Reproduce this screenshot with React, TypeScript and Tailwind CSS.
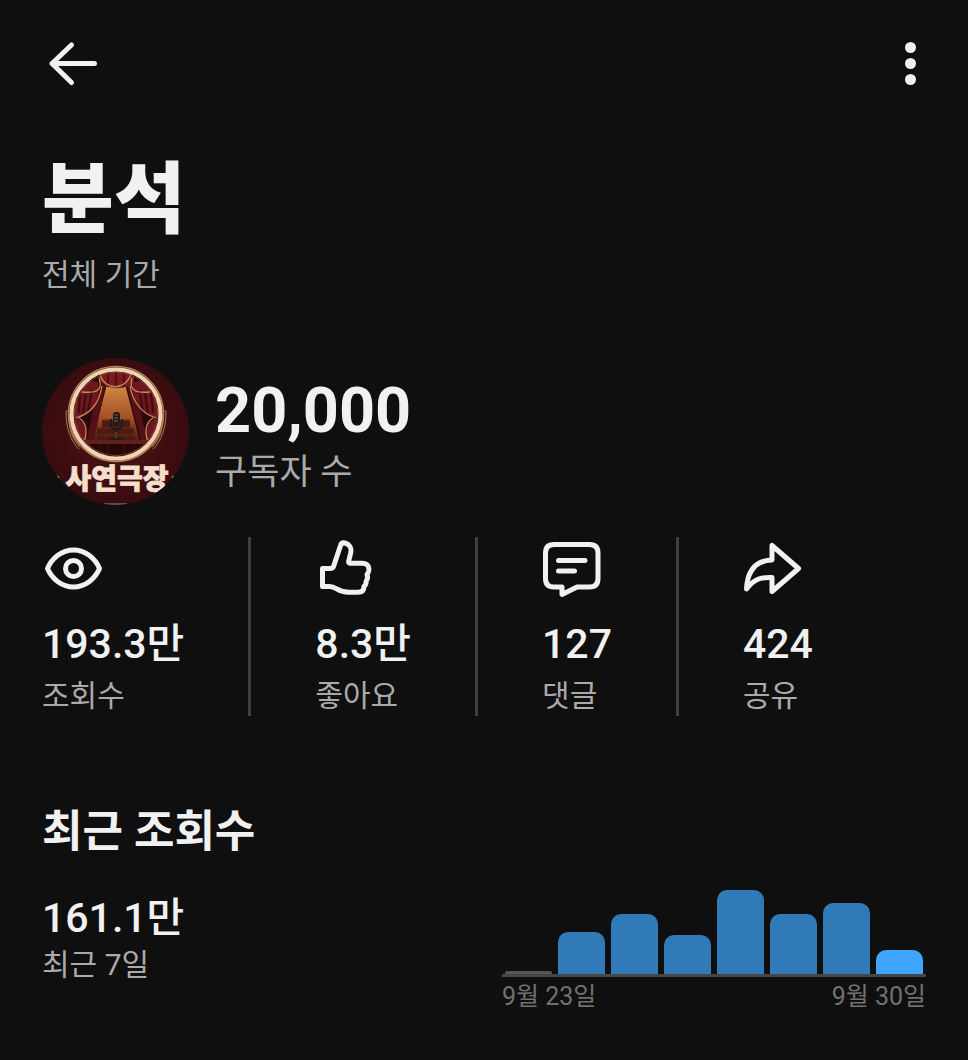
import type { ReactNode } from "react";

const bars = [
  { day: 23, views: 3, color: "bg-[#555555]", radius: "rounded-t-[2px]" },
  { day: 24, views: 42, color: "bg-[#307ab8]", radius: "rounded-t-[10px]" },
  { day: 25, views: 60, color: "bg-[#307ab8]", radius: "rounded-t-[10px]" },
  { day: 26, views: 39, color: "bg-[#307ab8]", radius: "rounded-t-[10px]" },
  { day: 27, views: 84, color: "bg-[#307ab8]", radius: "rounded-t-[10px]" },
  { day: 28, views: 60, color: "bg-[#307ab8]", radius: "rounded-t-[10px]" },
  { day: 29, views: 71, color: "bg-[#307ab8]", radius: "rounded-t-[10px]" },
  { day: 30, views: 24, color: "bg-[#40a5ff]", radius: "rounded-t-[10px]" },
];

const maxViews = Math.max(...bars.map((bar) => bar.views));

function StatIcon({ children }: { children: ReactNode }) {
  return (
    <svg
      className="block w-16 h-16"
      viewBox="0 1 64 64"
      fill="none"
      stroke="currentColor"
      strokeWidth="5"
      strokeLinecap="round"
      strokeLinejoin="round"
      aria-hidden="true"
    >
      {children}
    </svg>
  );
}

const stats = [
  {
    value: "193.3만",
    label: "조회수",
    icon: (
      <StatIcon>
        <path d="M5.500 32.500C10 22 20 14 31.500 14S53 22 57.500 32.500C53 43 43 51 31.500 51S10 43 5.500 32.500Z" />
        <circle cx="31.500" cy="32.500" r="8" />
      </StatIcon>
    ),
  },
  {
    value: "8.3만",
    label: "좋아요",
    icon: (
      <StatIcon>
        <path d="M7.500 32.500H15Q17.800 32.500 18.800 29.800L25.500 9.500Q26.500 6.200 30 7C34.500 8.200 36.800 12 35.800 16.500L33.700 25Q33.200 27.300 35.500 27.300H47Q54.500 27.300 53.800 34.500Q53.500 36.500 52 38.500Q53.500 41.500 51 45.500Q51.500 48.500 49 50.500Q49 56.300 43 56.300H34C22 56.300 22 50.500 14.500 50.500H7.500Z" />
      </StatIcon>
    ),
  },
  {
    value: "127",
    label: "댓글",
    icon: (
      <StatIcon>
        <path d="M12 8.500H47.500Q56 8.500 56 17V42.500Q56 51 47.500 51H35L20 58.500V51H12Q3.500 51 3.500 42.500V17Q3.500 8.500 12 8.500Z" />
        <path d="M16.500 24.500H43M16.500 35H32.500" />
      </StatIcon>
    ),
  },
  {
    value: "424",
    label: "공유",
    icon: (
      <StatIcon>
        <path d="M29 9.500V24C13 24.500 4.500 34 3.500 53C11 43 18 41 29 41.500V55.500L55.500 32.500Z" />
      </StatIcon>
    ),
  },
];

function Avatar() {
  return (
    <svg
      className="block w-[147px] h-[147px] shrink-0 rounded-full"
      viewBox="0 0 147 147"
      role="img"
      aria-label="사연극장"
    >
      <defs>
        <radialGradient id="backdrop" cx="50%" cy="50%" r="55%">
          <stop offset="0" stopColor="#501317" />
          <stop offset="1" stopColor="#360b0e" />
        </radialGradient>
        <linearGradient id="spotlight" x1="0" y1="0" x2="0" y2="1">
          <stop offset="0" stopColor="#d38a45" />
          <stop offset="0.55" stopColor="#a75427" />
          <stop offset="1" stopColor="#4c170f" />
        </linearGradient>
        <clipPath id="stage">
          <circle cx="74" cy="56" r="43" />
        </clipPath>
      </defs>
      <rect width="147" height="147" fill="url(#backdrop)" />

      {/* Side scrolls of the frame */}
      <g fill="none" stroke="#a97b4b" strokeWidth="1">
        <path d="M27 53H24C24 70 28 82 37 91M27 57C27 74 31 82 38 89" />
        <path d="M121 53H124C124 70 120 82 111 91M121 57C121 74 117 82 110 89" />
      </g>

      {/* Stage */}
      <g clipPath="url(#stage)">
        <rect x="30" y="12" width="88" height="90" fill="#280708" />
        <path d="M65 26H83L98 84H50Z" fill="url(#spotlight)" />
        <path d="M60 62H88V70H92V83H55V70H60Z" fill="#4c1b12" />
        <path d="M60 62H88M56 70H92M56 77H92" stroke="#6f2e19" strokeWidth="1" />
        <path d="M64 26L52 82H43C52 63 49 45 57 28Z" fill="#541015" />
        <path d="M84 26L99 82H107C98 63 100 45 91 28Z" fill="#541015" />
        <path d="M56 24C58 45 49 56 36 60H30V20Z" fill="#6e171e" />
        <path d="M91 24C89 45 100 56 112 60H119V20Z" fill="#6e171e" />
        <path d="M34 60C46 66 44 76 42 84L32 77Z" fill="#6e171e" />
        <path d="M114 60C102 66 104 76 106 84L116 77Z" fill="#6e171e" />
        <path d="M38 34L37 55M44 36L41 56M50 32L46 54M109 34L111 55M103 36L106 56M97 32L101 54" stroke="#3d0a10" strokeWidth="2" />
        <path d="M56 12H92V25Q74 36 58 24Z" fill="#7b1b20" />
        <path d="M66 15V29M74 13V30M82 15V29" stroke="#4d0e14" strokeWidth="2" />
        <path d="M58 16C62 32 83 34 89 16M57 20C62 34 52 35 40 34M90 20C86 34 96 35 108 34M60 28C57 45 50 55 34 60M88 28C91 45 99 55 114 60M37 60C45 65 45 75 42 84M111 60C103 65 103 75 106 84" fill="none" stroke="#c18b58" strokeWidth="1.300" />
        <rect x="36" y="82" width="76" height="4" fill="#5f2117" />
        <rect x="33" y="86" width="83" height="16" fill="#280608" />
        <path d="M39 86V98M48 86V100M57 86V101M66 86V102M82 86V102M92 86V101M102 86V99" stroke="#43100e" strokeWidth="1" />
        <rect x="71" y="54" width="7" height="14" rx="3" fill="#211b19" />
        <path d="M69 61V69Q74 73 80 69V61M74 70V80M68 81H80" fill="none" stroke="#211b19" strokeWidth="2" />
        <path d="M72 57H76M72 60H76M72 63H76M74 74V80" stroke="#746351" strokeWidth="1" />
      </g>
      <circle cx="74" cy="56" r="47.500" fill="none" stroke="#b38355" strokeWidth="1.500" />
      <circle cx="74" cy="56" r="44.500" fill="none" stroke="#f0d2b4" strokeWidth="4" />
      <circle cx="74" cy="56" r="41.500" fill="none" stroke="#7b4028" strokeWidth="1" />

      <text
        x="75"
        y="131"
        textAnchor="middle"
        className="font-['Noto_Sans_CJK_KR',sans-serif] text-[28px] font-black"
        fill="#f6dfca"
        stroke="#f6dfca"
        strokeWidth="0.800"
      >
        사연극장
      </text>
      <path d="M15 118L17 120M130 120L132 118" stroke="#c9a184" strokeWidth="1.500" />
      <path d="M62 146H85" stroke="#a9877d" strokeWidth="1" />
    </svg>
  );
}

export default function App() {
  return (
    <div className="min-h-screen bg-[#0f0f0f] text-[#f1f1f1] font-['Roboto','Noto_Sans_CJK_KR',sans-serif]">
      {/* Top bar */}
      <header className="flex items-center justify-between px-9 pt-7">
        <button type="button" aria-label="뒤로" className="w-[72px] h-[72px]">
          <svg
            className="block w-full h-full"
            viewBox="0 0 72 72"
            fill="none"
            stroke="currentColor"
            strokeWidth="5"
            strokeLinecap="round"
            strokeLinejoin="round"
            aria-hidden="true"
          >
            <path d="M35.500 17L16 35.500L35.500 54.500M16 35.500H58.500" />
          </svg>
        </button>
        <button type="button" aria-label="더보기" className="w-11 h-[72px]">
          <svg className="block w-full h-full" viewBox="0 0 44 72" fill="currentColor" aria-hidden="true">
            <circle cx="22.500" cy="19.500" r="5.500" />
            <circle cx="22.500" cy="35.500" r="5.500" />
            <circle cx="22.500" cy="51.500" r="5.500" />
          </svg>
        </button>
      </header>

      <main className="px-[42px] pt-12 pb-12">
        <h1 className="text-[78px] leading-[106px] font-black">분석</h1>
        <p className="text-[30px] leading-[42px] text-[#aaaaaa]">전체 기간</p>

        {/* Channel */}
        <section className="mt-[62px] flex items-center gap-[26px]">
          <Avatar />
          <div className="pt-3.5">
            <p className="text-[63px] leading-[68px] font-bold">20,000</p>
            <p className="text-[35px] leading-[56px] text-[#aaaaaa]">구독자 수</p>
          </div>
        </section>

        {/* Totals */}
        <section className="mt-8 flex">
          {stats.map((stat) => (
            <div
              key={stat.label}
              className="h-[179px] px-16 border-l-[3px] border-[#3f3f3f] first:border-l-0 first:pl-0"
            >
              {stat.icon}
              <p className="mt-3 text-[41px] leading-[62px] font-medium">{stat.value}</p>
              <p className="text-[30px] leading-[42px] text-[#aaaaaa]">{stat.label}</p>
            </div>
          ))}
        </section>

        {/* Recent views */}
        <section className="mt-20">
          <h2 className="text-[44px] leading-[72px] font-bold">최근 조회수</h2>
          <div className="mt-[22px] flex items-start justify-between">
            <div>
              <p className="text-[41px] leading-[56px] font-medium">161.1만</p>
              <p className="text-[30px] leading-[38px] text-[#aaaaaa]">최근 7일</p>
            </div>
            <div className="w-[424px]">
              <div className="flex h-[87px] items-end gap-1.5 border-b-[3px] border-[#464646] px-[3px]">
                {bars.map((bar) => (
                  <div
                    key={bar.day}
                    className={`flex-1 ${bar.radius} ${bar.color}`}
                    style={{ height: `${(bar.views / maxViews) * 100}%` }}
                  />
                ))}
              </div>
              <div className="flex justify-between text-[25px] leading-[40px] text-[#717171]">
                <span>9월 23일</span>
                <span>9월 30일</span>
              </div>
            </div>
          </div>
        </section>
      </main>
    </div>
  );
}
